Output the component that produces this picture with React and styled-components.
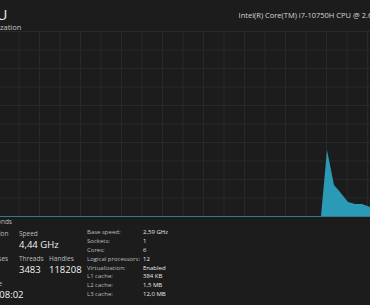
import styled, { createGlobalStyle } from "styled-components";

const GlobalStyle = createGlobalStyle`
  html, body {
    margin: 0;
    padding: 0;
    background: #1c1c1c;
  }
  body {
    font-family: "Open Sans", "Noto Sans", sans-serif;
    color: #e6e6e6;
    overflow: hidden;
  }
`;

const Page = styled.div`
  width: 370px;
  height: 305px;
  overflow: hidden;
  background: #1c1c1c;
`;

const Panel = styled.div`
  width: 410px;
  margin-left: -22px;
  display: flex;
  flex-direction: column;
`;

const Header = styled.div`
  display: flex;
  justify-content: space-between;
  align-items: flex-start;
  height: 31px;
`;

const TitleBlock = styled.div`
  display: flex;
  flex-direction: column;
`;

const Title = styled.div`
  font-size: 15px;
  line-height: 15px;
  margin-top: 7px;
  color: #ececec;
`;

const Subtitle = styled.div`
  font-size: 7.5px;
  line-height: 9px;
  margin-top: 1px;
  color: #c4c4c4;
`;

const CpuName = styled.div`
  font-size: 7.5px;
  line-height: 10px;
  margin-top: 10px;
  margin-right: -3px;
  color: #d6d6d6;
  white-space: nowrap;
`;

const GraphBox = styled.div`
  height: 186px;
  line-height: 0;
`;

const Caption = styled.div`
  font-size: 6.5px;
  line-height: 8px;
  margin-top: 1px;
  color: #bdbdbd;
`;

const Stats = styled.div`
  display: flex;
  margin-top: 4px;
`;

const StatGrid = styled.div`
  display: grid;
  grid-template-columns: 41px 30px 38px;
  grid-auto-rows: auto;
  row-gap: 3px;
  width: 109px;
`;

const Stat = styled.div`
  display: flex;
  flex-direction: column;
  grid-column: ${(p) => p.$span || "auto"};
  white-space: nowrap;
`;

const StatLabel = styled.div`
  font-size: 6.5px;
  line-height: 8px;
  color: #bdbdbd;
`;

const StatValue = styled.div`
  font-size: 9.5px;
  line-height: 14px;
  color: #f2f2f2;
`;

const InfoTable = styled.div`
  display: grid;
  grid-template-columns: 56px auto;
  grid-auto-rows: 8.8px;
  align-items: center;
  margin-top: -2px;
`;

const InfoLabel = styled.div`
  font-size: 6px;
  line-height: 8px;
  color: #bdbdbd;
  white-space: nowrap;
`;

const InfoValue = styled.div`
  font-size: 6px;
  line-height: 8px;
  color: #e8e8e8;
  white-space: nowrap;
`;

const info = [
  ["Base speed:", "2,59 GHz"],
  ["Sockets:", "1"],
  ["Cores:", "6"],
  ["Logical processors:", "12"],
  ["Virtualization:", "Enabled"],
  ["L1 cache:", "384 KB"],
  ["L2 cache:", "1,5 MB"],
  ["L3 cache:", "12,0 MB"],
];

const chart = [
  [321, 216],
  [327, 150],
  [334, 185],
  [340, 192],
  [348, 202],
  [355, 204],
  [362, 204],
  [370, 207],
  [378, 209],
  [388, 210],
];

const Graph = () => {
  const cols = Array.from({ length: 21 }, (_, k) => -22 + 20.5 * k);
  const rows = Array.from({ length: 10 }, (_, k) => 31.5 + 18.5 * k);
  const area =
    chart.map(([x, y], i) => `${i ? "L" : "M"}${x} ${y}`).join(" ") +
    " L388 216 Z";
  return (
    <svg width="410" height="186" viewBox="-22 31 410 186">
      {cols.map((x) => (
        <line key={x} x1={x} x2={x} y1="31" y2="216" stroke="#292929" strokeWidth="1" />
      ))}
      {rows.map((y) => (
        <line key={y} x1="-22" x2="388" y1={y} y2={y} stroke="#292929" strokeWidth="1" />
      ))}
      <path d={area} fill="#2a9ab7" />
      <line x1="-22" x2="388" y1="216.5" y2="216.5" stroke="#2d7b90" strokeWidth="1" />
    </svg>
  );
};

export default function App() {
  return (
    <Page>
      <GlobalStyle />
      <Panel>
        <Header>
          <TitleBlock>
            <Title>CPU</Title>
            <Subtitle>% Utilization</Subtitle>
          </TitleBlock>
          <CpuName>Intel(R) Core(TM) i7-10750H CPU @ 2.60GHz</CpuName>
        </Header>
        <GraphBox>
          <Graph />
        </GraphBox>
        <Caption>60 seconds</Caption>
        <Stats>
          <StatGrid>
            <Stat>
              <StatLabel>Utilization</StatLabel>
              <StatValue>16%</StatValue>
            </Stat>
            <Stat $span="2 / span 2">
              <StatLabel>Speed</StatLabel>
              <StatValue>4,44 GHz</StatValue>
            </Stat>
            <Stat>
              <StatLabel>Processes</StatLabel>
              <StatValue>221</StatValue>
            </Stat>
            <Stat>
              <StatLabel>Threads</StatLabel>
              <StatValue>3483</StatValue>
            </Stat>
            <Stat>
              <StatLabel>Handles</StatLabel>
              <StatValue>118208</StatValue>
            </Stat>
            <Stat $span="1 / span 3">
              <StatLabel>Up time</StatLabel>
              <StatValue>0:00:08:02</StatValue>
            </Stat>
          </StatGrid>
          <InfoTable>
            {info.map(([label, value]) => (
              <>
                <InfoLabel key={label}>{label}</InfoLabel>
                <InfoValue key={label + "v"}>{value}</InfoValue>
              </>
            ))}
          </InfoTable>
        </Stats>
      </Panel>
    </Page>
  );
}
